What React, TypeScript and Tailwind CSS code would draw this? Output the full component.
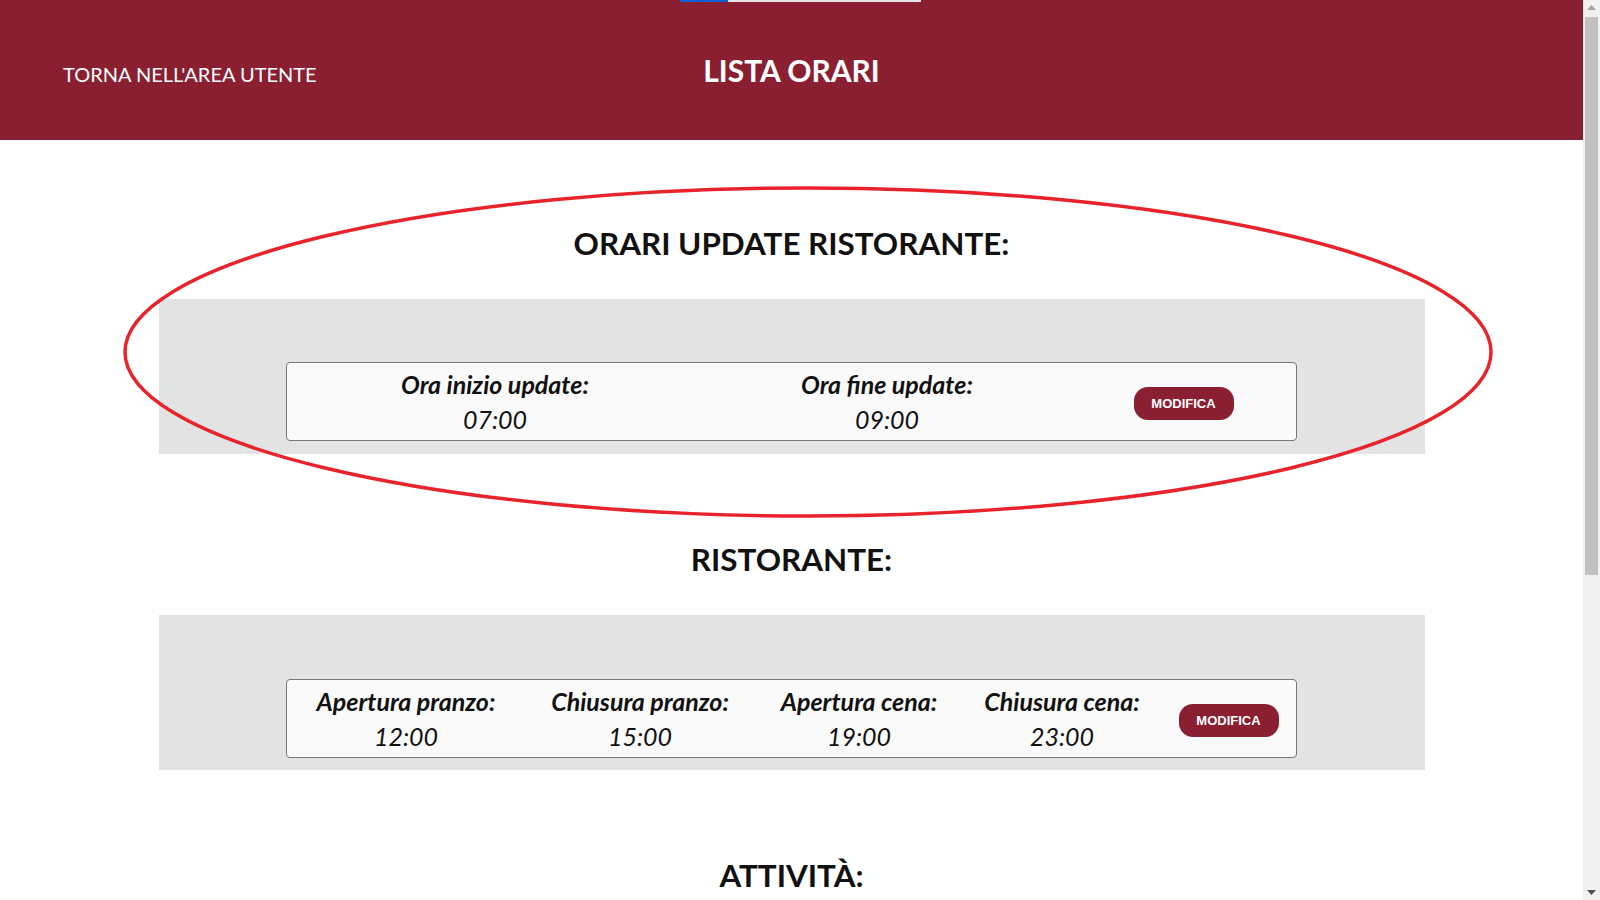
import React from "react";

const lato = { fontFamily: "Lato, 'Open Sans', sans-serif" };

function ModificaButton() {
  return (
    <button
      className="h-[33px] w-[100px] rounded-[14px] bg-[#8a1f31] text-[13px] font-bold text-white"
      style={{ fontFamily: "'Liberation Sans', Arial, sans-serif" }}
    >
      MODIFICA
    </button>
  );
}

function Field({ label, value, width }: { label: string; value: string; width: string }) {
  return (
    <div className={`${width} flex flex-col items-center pt-[7px]`}>
      <div className="h-[29px] text-[25px] font-bold italic leading-[29px] text-[#111]">{label}</div>
      <div className="mt-[6px] h-[29px] text-[25px] italic leading-[29px] text-[#111]">{value}</div>
    </div>
  );
}

function Section({ title, first, children }: { title: string; first?: boolean; children?: React.ReactNode }) {
  return (
    <section className={first ? "pt-[83px]" : "pt-[85px]"}>
      <h2 className="h-[40px] text-center text-[31.4px] font-bold leading-[40px] text-[#111]">{title}</h2>
      {children}
    </section>
  );
}

export default function App() {
  return (
    <div className="flex h-[900px] w-[1600px] overflow-hidden bg-white" style={lato}>
      <div className="relative flex-1">
        <header className="relative grid h-[140px] grid-cols-[1fr_auto_1fr] items-center bg-[#8a1f31]">
          <div className="absolute left-[680px] top-0 flex h-[2px]">
            <div className="w-[48px] bg-[#0b63d6]" />
            <div className="w-[193px] bg-[#e6e6e6]" />
          </div>
          <div className="mt-[8px] pl-[63px] text-[20px] text-white">TORNA NELL'AREA UTENTE</div>
          <h1 className="text-[30px] font-bold text-white">LISTA ORARI</h1>
          <div />
        </header>

        <Section title="ORARI UPDATE RISTORANTE:" first>
          <div className="mx-auto mt-[36px] h-[155px] w-[1266px] bg-[#e3e3e3] pt-[63px]">
            <div className="mx-auto flex h-[79px] w-[1011px] rounded-[4px] border border-[#777] bg-[#fafafa]">
              <Field label="Ora inizio update:" value="07:00" width="w-[416px]" />
              <Field label="Ora fine update:" value="09:00" width="w-[368px]" />
              <div className="flex flex-1 items-center justify-center pt-[4px]">
                <ModificaButton />
              </div>
            </div>
          </div>
        </Section>

        <Section title="RISTORANTE:">
          <div className="mx-auto mt-[36px] h-[155px] w-[1266px] bg-[#e3e3e3] pt-[64px]">
            <div className="mx-auto flex h-[79px] w-[1011px] rounded-[4px] border border-[#777] bg-[#fafafa]">
              <Field label="Apertura pranzo:" value="12:00" width="w-[238px]" />
              <Field label="Chiusura pranzo:" value="15:00" width="w-[230px]" />
              <Field label="Apertura cena:" value="19:00" width="w-[208px]" />
              <Field label="Chiusura cena:" value="23:00" width="w-[198px]" />
              <div className="flex flex-1 items-center justify-center pt-[4px]">
                <ModificaButton />
              </div>
            </div>
          </div>
        </Section>

        <Section title="ATTIVITÀ:" />

        <svg
          className="pointer-events-none absolute left-[122px] top-[185px]"
          width="1372"
          height="334"
          viewBox="0 0 1372 334"
        >
          <ellipse cx="686" cy="167" rx="683" ry="164" fill="none" stroke="#e8232b" strokeWidth="3.5" />
        </svg>
      </div>

      <div className="relative h-[900px] w-[17px] bg-[#f1f1f1]">
        <svg className="absolute left-[4px] top-[5px]" width="9" height="6" viewBox="0 0 9 6">
          <polygon points="4.5,0 9,5 0,5" fill="#a3a3a3" />
        </svg>
        <div className="absolute left-[2px] top-[17px] h-[558px] w-[13px] bg-[#c1c1c1]" />
        <svg className="absolute bottom-[5px] left-[4px]" width="9" height="6" viewBox="0 0 9 6">
          <polygon points="0,1 9,1 4.5,6" fill="#505050" />
        </svg>
      </div>
    </div>
  );
}
